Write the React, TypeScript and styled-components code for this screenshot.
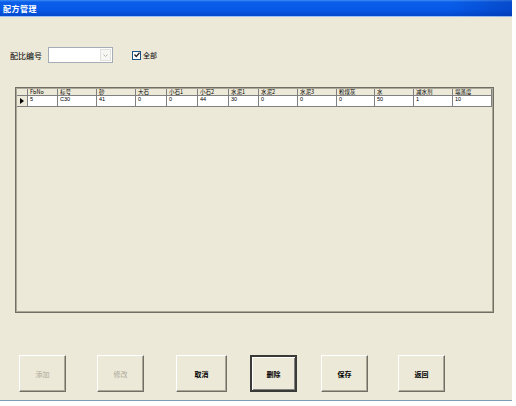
import * as React from "react";
import styled, { createGlobalStyle, css } from "styled-components";

const GlobalStyle = createGlobalStyle`
  html, body {
    margin: 0;
    padding: 0;
    background: #ffffff;
  }
  body {
    font-family: "Noto Sans CJK SC", "Liberation Sans", sans-serif;
  }
`;

const Window = styled.div`
  width: 512px;
  height: 400px;
  background: #ece9d8;
  border-bottom: 1px solid #7f9db9;
  display: flex;
  flex-direction: column;
`;

const TitleBar = styled.div`
  height: 16px;
  flex: none;
  display: flex;
  align-items: center;
  padding-left: 3px;
  background: linear-gradient(
      to right,
      rgba(0, 0, 0, 0) 0,
      rgba(0, 0, 0, 0) 88%,
      rgba(0, 20, 120, 0.25) 100%
    ),
    linear-gradient(#3d8df7 0, #0a5ee8 2px, #0659e6 60%, #0349cc 100%);
  color: #ffffff;
  font-size: 8px;
  font-weight: 700;
  letter-spacing: 0.5px;
  border-bottom: 1px solid #ffffff80;
`;

const FilterRow = styled.div`
  margin-top: 30px;
  height: 16px;
  display: flex;
  align-items: center;
  padding-left: 10px;
  font-size: 8px;
  color: #000;
`;

const Label = styled.span`
  width: 38px;
`;

const Combo = styled.div`
  width: 62px;
  height: 14px;
  background: #fff;
  border: 1px solid #a5acb5;
  display: flex;
  justify-content: flex-end;
  align-items: center;
  padding-right: 1px;
`;

const ComboButton = styled.div`
  width: 11px;
  height: 12px;
  border: 1px solid #e0e0dc;
  background: #f6f6f3;
  display: flex;
  align-items: center;
  justify-content: center;
  box-sizing: border-box;
`;

const CheckWrap = styled.label`
  margin-left: 19px;
  display: flex;
  align-items: center;
  gap: 2px;
  font-size: 7px;
`;

const CheckBox = styled.span`
  width: 7px;
  height: 7px;
  border: 1px solid #1c5180;
  background: #fff;
  display: flex;
  align-items: center;
  justify-content: center;
`;

const GridFrame = styled.div`
  margin: 24px 0 0 15px;
  width: 479px;
  height: 226px;
  box-sizing: border-box;
  border: 1px solid #716f64;
  box-shadow: inset 0 0 0 1px #aca899;
  padding: 1px;
  background: #ece9d8;
`;

const COLS = [11, 30, 39, 39, 31, 31, 31, 30, 39, 39, 38, 39, 39, 39];

const Grid = styled.div`
  display: grid;
  grid-template-columns: ${COLS.map((c) => c + "px").join(" ")};
  grid-template-rows: 7px 11px;
`;

const Cell = styled.div<{ $head?: boolean; $rowHead?: boolean }>`
  box-sizing: border-box;
  border-right: 1px solid #808080;
  border-bottom: 1px solid #808080;
  padding-left: 2px;
  overflow: hidden;
  white-space: nowrap;
  color: #000;
  ${({ $head }) =>
    $head
      ? css`
          background: #ece9d8;
          font-size: 5.5px;
          line-height: 6px;
        `
      : css`
          background: #ffffff;
          font-family: "Liberation Sans", "Noto Sans CJK SC", sans-serif;
          font-size: 5.5px;
          line-height: 6px;
        `}
  ${({ $rowHead }) =>
    $rowHead &&
    css`
      background: #ece9d8;
      display: flex;
      align-items: center;
      justify-content: center;
      padding-left: 0;
    `}
`;

const ButtonRow = styled.div`
  margin-top: 42px;
  display: flex;
  align-items: flex-start;
`;

const Button = styled.button<{ $gap: number; $w?: number; $default?: boolean }>`
  margin-left: ${({ $gap }) => $gap}px;
  width: ${({ $w }) => $w ?? 47}px;
  height: 37px;
  padding: 0;
  background: #ece9d8;
  font-family: "Noto Sans CJK SC", sans-serif;
  font-size: 7px;
  font-weight: 700;
  color: #000;
  border: 1px solid;
  border-color: #ffffff #716f64 #716f64 #ffffff;
  box-shadow: inset -1px -1px 0 #aca899;
  &:disabled {
    color: #aca899;
    font-weight: 400;
  }
  ${({ $default }) =>
    $default &&
    css`
      border: 2px solid #3a3a36;
      box-shadow: inset 1px 1px 0 #ffffff, inset -1px -1px 0 #808080;
    `}
`;

const headers = [
  "FbNo",
  "标号",
  "砂",
  "大石",
  "小石1",
  "小石2",
  "水泥1",
  "水泥2",
  "水泥3",
  "粉煤灰",
  "水",
  "减水剂",
  "塌落度",
];

const row = ["5", "C30", "41", "0", "0", "44", "30", "0", "0", "0", "50", "1", "10"];

const buttons = [
  { label: "添加", gap: 19, disabled: true },
  { label: "修改", gap: 31, disabled: true },
  { label: "取消", gap: 32, w: 51 },
  { label: "删除", gap: 23, def: true },
  { label: "保存", gap: 24 },
  { label: "返回", gap: 30 },
];

export default function App() {
  return (
    <>
      <GlobalStyle />
      <Window>
        <TitleBar>配方管理</TitleBar>
        <FilterRow>
          <Label>配比编号</Label>
          <Combo>
            <ComboButton>
              <svg width="5" height="3" viewBox="0 0 5 3">
                <path d="M0.5 0.5 L2.5 2.5 L4.5 0.5" stroke="#b8b8b0" fill="none" strokeWidth="1" />
              </svg>
            </ComboButton>
          </Combo>
          <CheckWrap>
            <CheckBox>
              <svg width="6" height="6" viewBox="0 0 6 6">
                <path d="M0.5 2.5 L2.3 4.5 L5.5 0.8" stroke="#222" fill="none" strokeWidth="1.3" />
              </svg>
            </CheckBox>
            全部
          </CheckWrap>
        </FilterRow>
        <GridFrame>
          <Grid>
            <Cell $head $rowHead />
            {headers.map((h) => (
              <Cell key={h} $head>
                {h}
              </Cell>
            ))}
            <Cell $rowHead>
              <svg width="4" height="6" viewBox="0 0 4 6">
                <path d="M0 0 L4 3 L0 6 Z" fill="#000" />
              </svg>
            </Cell>
            {row.map((v, i) => (
              <Cell key={i}>{v}</Cell>
            ))}
          </Grid>
        </GridFrame>
        <ButtonRow>
          {buttons.map((b) => (
            <Button
              key={b.label}
              $gap={b.gap}
              $w={b.w}
              $default={b.def}
              disabled={b.disabled}
            >
              {b.label}
            </Button>
          ))}
        </ButtonRow>
      </Window>
    </>
  );
}
